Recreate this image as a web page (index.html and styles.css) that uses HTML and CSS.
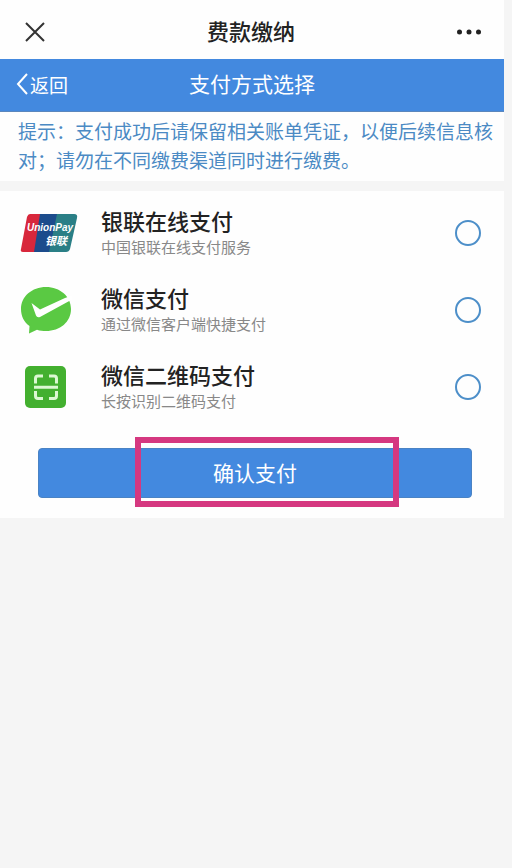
FILE: index.html
```html
<!DOCTYPE html>
<html lang="zh-CN">
<head>
    <meta charset="UTF-8">
    <meta name="viewport" content="width=device-width, initial-scale=1.0">
    <title>费款缴纳</title>
    <link rel="stylesheet" href="styles.css">
</head>
<body>
    <div class="page">
        <header class="top-bar">
            <button type="button" class="icon-btn" aria-label="关闭">
                <svg width="20" height="20" viewBox="0 0 20 20" fill="none" stroke="#333" stroke-width="2">
                    <path d="M1 1L19 19M19 1L1 19"/>
                </svg>
            </button>
            <h1>费款缴纳</h1>
            <button type="button" class="icon-btn" aria-label="更多">
                <svg width="24" height="6" viewBox="0 0 24 6" fill="#222">
                    <circle cx="2.5" cy="3" r="2.5"/>
                    <circle cx="12" cy="3" r="2.5"/>
                    <circle cx="21.5" cy="3" r="2.5"/>
                </svg>
            </button>
        </header>

        <nav class="nav-bar">
            <a href="#" class="back">
                <svg width="12" height="22" viewBox="0 0 12 22" fill="none" stroke="#fff" stroke-width="2">
                    <path d="M11 1L2 11L11 21"/>
                </svg>
                返回
            </a>
            <h2>支付方式选择</h2>
        </nav>

        <p class="tips">提示：支付成功后请保留相关账单凭证，以便后续信息核对；请勿在不同缴费渠道同时进行缴费。</p>

        <form class="pay-form">
            <!-- 银联 -->
            <label class="pay-item">
                <span class="pay-icon">
                    <svg width="58" height="38" viewBox="0 0 58 38">
                        <path d="M10 0H27L19 38H3Q0 38 1 35L7 3Q8 0 10 0Z" fill="#d8273c"/>
                        <path d="M20 0H38L31 38H14Z" fill="#1c4c8c"/>
                        <path d="M37 0H54Q58 0 57 4L50 35Q49 38 46 38H29Z" fill="#2a7f86"/>
                        <text x="7" y="17" class="union-en" fill="#fff">UnionPay</text>
                        <text x="25" y="31" class="union-cn" fill="#fff">银联</text>
                    </svg>
                </span>
                <span class="pay-text">
                    <strong>银联在线支付</strong>
                    <small>中国银联在线支付服务</small>
                </span>
                <input type="radio" name="pay" value="union">
            </label>

            <!-- 微信 -->
            <label class="pay-item">
                <span class="pay-icon">
                    <svg width="52" height="48" viewBox="0 0 52 48">
                        <path d="M26 1C12 1 1 10.500 1 23C1 30 4 36 9.500 40L9 47.500L17 43.700C20 44.700 23 45 26 45C40 45 51 36 51 23C51 10.500 40 1 26 1Z" fill="#5ac943"/>
                        <path d="M11.500 17L20 23.500L45 12L52 9.500V13.500L20 31Q17 32 16 29.500Z" fill="#fff"/>
                    </svg>
                </span>
                <span class="pay-text">
                    <strong>微信支付</strong>
                    <small>通过微信客户端快捷支付</small>
                </span>
                <input type="radio" name="pay" value="wechat">
            </label>

            <!-- 二维码 -->
            <label class="pay-item">
                <span class="pay-icon">
                    <svg width="52" height="42" viewBox="0 0 52 42">
                        <rect x="5" y="0" width="41" height="42" rx="5" fill="#43b02f"/>
                        <path d="M23 10H18Q15.500 10 15.500 12.500V17.500M29 10H34Q36.500 10 36.500 12.500V17.500M23 32.500H18Q15.500 32.500 15.500 30V25M29 32.500H34Q36.500 32.500 36.500 30V25M14 21.200H38" fill="none" stroke="#dcf8d2" stroke-width="3"/>
                    </svg>
                </span>
                <span class="pay-text">
                    <strong>微信二维码支付</strong>
                    <small>长按识别二维码支付</small>
                </span>
                <input type="radio" name="pay" value="qrcode">
            </label>

            <div class="submit-wrap">
                <button type="button" class="submit-btn">确认支付</button>
                <span class="highlight"></span>
            </div>
        </form>
    </div>
</body>
</html>
```
FILE: styles.css
```css
* {
    box-sizing: border-box;
}

body {
    margin: 0;
    background-color: #f5f5f5;
    font-family: "Noto Sans CJK SC", sans-serif;
    color: #222;
}

.page {
    margin-right: 8px;
}

/* Top bar */
.top-bar {
    display: flex;
    align-items: center;
    justify-content: space-between;
    height: 59px;
    padding: 4px 23px 0 25px;
    background-color: #fefefe;
}

.top-bar h1 {
    margin: 0;
    padding-bottom: 4px;
    font-size: 22px;
    font-weight: 500;
    line-height: 32px;
}

.icon-btn {
    display: flex;
    align-items: center;
    padding: 0;
    border: 0;
    background: none;
}

/* Blue navigation bar */
.nav-bar {
    display: grid;
    grid-template-columns: 1fr auto 1fr;
    align-items: center;
    height: 53px;
    padding: 0 16px 2px;
    background-color: #4389df;
    border-bottom: 1px solid #5b87bd;
    color: #fff;
}

.nav-bar h2 {
    margin: 0;
    padding-bottom: 2px;
    font-size: 21px;
    font-weight: 400;
    line-height: 30px;
}

.back {
    display: flex;
    align-items: center;
    gap: 2px;
    font-size: 19px;
    color: #fff;
    text-decoration: none;
}

/* Tips */
.tips {
    margin: 0 0 10px;
    padding: 4px 6px 7px 18px;
    background-color: #fefefe;
    font-size: 19px;
    line-height: 29px;
    color: #4b8ac4;
}

/* Payment methods */
.pay-form {
    padding: 3px 0 20px;
    background-color: #fefefe;
}

.pay-item {
    display: flex;
    align-items: center;
    height: 77px;
    padding: 0 23px 0 20px;
}

.pay-icon {
    display: flex;
    width: 81px;
}

.union-en {
    font: italic bold 10px "Liberation Sans", sans-serif;
}

.union-cn {
    font-size: 11px;
    font-weight: 700;
    font-style: italic;
}

.pay-text {
    flex: 1;
    display: flex;
    flex-direction: column;
    padding-bottom: 2px;
}

.pay-text strong {
    font-size: 22px;
    font-weight: 500;
    line-height: 30px;
}

.pay-text small {
    font-size: 15px;
    line-height: 24px;
    color: #888;
}

.pay-item input {
    appearance: none;
    width: 26px;
    height: 26px;
    margin: 0;
    border: 2px solid #4d8fc9;
    border-radius: 50%;
}

.pay-item input:checked {
    background-color: #4389df;
}

/* Submit */
.submit-wrap {
    position: relative;
    margin: 23px 32px 0 38px;
}

.submit-btn {
    display: block;
    width: 100%;
    height: 50px;
    padding: 0 0 2px;
    border: 1px solid #4a83c4;
    border-radius: 4px;
    background-color: #4389df;
    font-family: inherit;
    font-size: 21px;
    color: #fff;
}

.highlight {
    position: absolute;
    top: -11px;
    right: 73px;
    bottom: -9px;
    left: 97px;
    border: 6px solid #d53880;
    pointer-events: none;
}
```
